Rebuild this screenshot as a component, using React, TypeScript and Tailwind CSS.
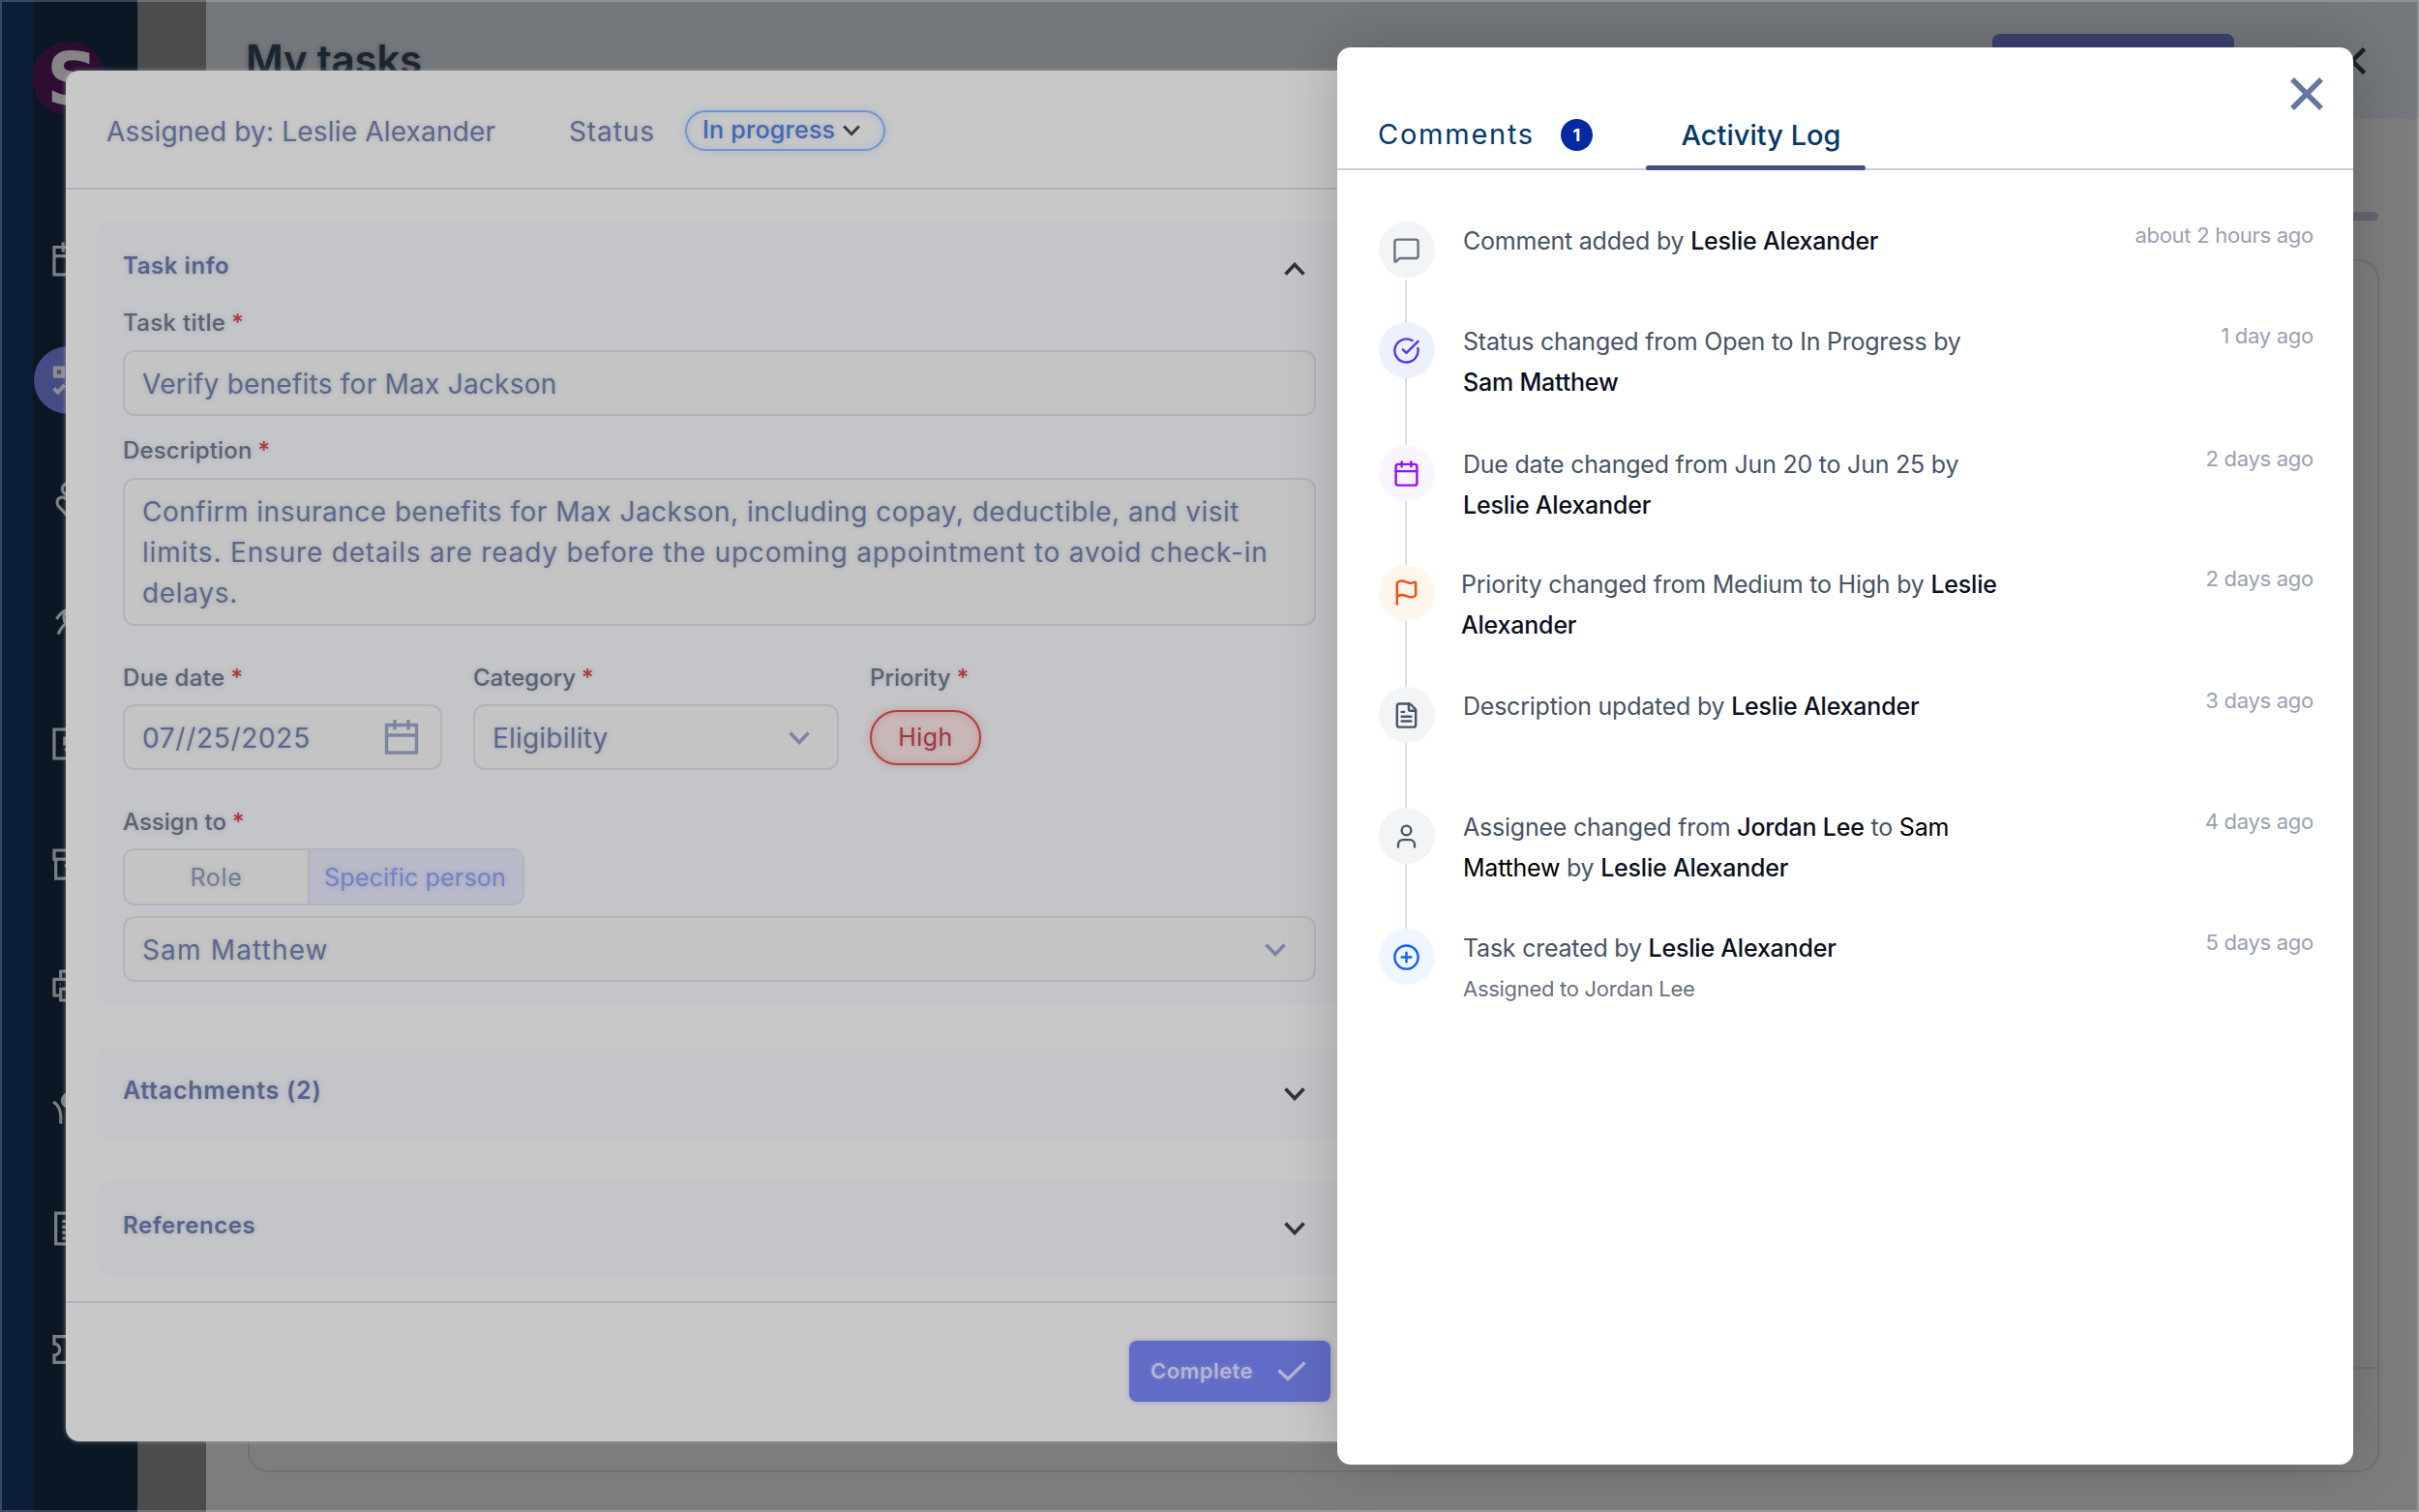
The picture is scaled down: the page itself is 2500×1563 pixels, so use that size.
import React from "react";
import {
  Calendar,
  CircleCheckBig,
  CirclePlus,
  FileText,
  Flag,
  MessageSquare,
  User,
} from "lucide-react";

/* ---------- sidebar icons ---------- */

const navIcons: React.ReactNode[] = [
  <g key="calendar">
    <path d="M3 4.5h18v17H3zM3 10h18M8.5 1.5v6M15.5 1.5v6" />
  </g>,
  <g key="tasks">
    <path d="M3.500 4.500h5v5h-5zM2.800 17l2.500 2.500L9.500 15M13.5 7H21M13.5 17.5H21" strokeWidth="2.4" />
  </g>,
  <g key="care">
    <circle cx="11.5" cy="4.5" r="3.5" />
    <path d="M12 22 6 15.5c-2-2.2-1.2-5.5 1.5-5.8 1.8-.2 3.5 1 4.5 2.8 1-1.800 2.700-3 4.500-2.800 2.700.3 3.500 3.600 1.500 5.800Z" />
  </g>,
  <g key="exam">
    <path d="M4.500 9.500C6 7 8 5 10.500 4M5.500 19c1-2.500 2-4.500 4-6M10.500 4c-2 3-2 6 0 9M14 8l4 4M12 12l6 6" />
  </g>,
  <g key="billing">
    <path d="M3 3h18v18H3z" />
    <path d="M14.500 8.500H9.500V12h5v3.500h-5M12 7v10" />
  </g>,
  <g key="archive">
    <path d="M3 3h18v5.500H3zM4 8.500h16V20.500H4zM9.500 12.500h5" />
  </g>,
  <g key="printer">
    <path d="M7 8V3h10v5M6 18H3V8h18v10h-3M7 14h10v7H7zM6.500 11h.5" />
  </g>,
  <g key="people">
    <path d="M2.500 8.500c4 2.500 5 6.500 4.500 13.500M21.500 8.500c-4 2.500-5 6.500-4.500 13.500" />
    <circle cx="12" cy="7.500" r="4" fill="currentColor" />
  </g>,
  <g key="notes">
    <path d="M4 2.500h16v19H4zM8 7.500h8M8 11h8M8 14.500h8M8 18h5" />
  </g>,
  <g key="ticket">
    <path d="M3 4h18v4.500a3.500 3.500 0 0 0 0 7V20H3v-4.500a3.500 3.500 0 0 0 0-7Z" />
  </g>,
];

function Backdrop() {
  return (
    <div className="flex h-full w-full">
      <div className="w-[34px] bg-[#0c1e39]" />
      <div className="flex w-[108px] flex-col bg-[#0b1724]">
        <div className="ml-[-1px] mt-[43px] flex h-[76px] w-[76px] items-center rounded-full bg-[#2d0e32] pl-[15px] pt-[2px] text-[74px] font-bold leading-none text-[#858585] [font-family:'DejaVu_Sans',sans-serif]">
          S
        </div>
        <div className="mt-[86px] flex w-[73px] flex-col text-[#7b8085]">
          {navIcons.map((icon, i) => (
            <div key={i} className="flex h-[125.300px] items-center justify-center">
              <div
                className={
                  i === 1
                    ? "flex h-[70px] w-[72px] shrink-0 items-center justify-center rounded-full bg-[#454b84] text-[#8d8d8f]"
                    : "flex h-[70px] w-[72px] shrink-0 items-center justify-center"
                }
              >
                <svg viewBox="0 0 24 24" className="h-[40px] w-[40px]" fill="none" stroke="currentColor" strokeWidth="1.900">
                  {icon}
                </svg>
              </div>
            </div>
          ))}
        </div>
      </div>
      <div className="w-[71px] bg-[#4c4c4e]" />
      <div className="flex flex-1 flex-col bg-[#7d7d7d]">
        <div className="flex h-[123px] items-start bg-[#74777b]">
          <div className="ml-[41px] mt-[37px] w-[1805px] text-[42px] font-semibold leading-[50px] tracking-[-0.200px] text-[#1b2531] [text-shadow:0_0_5px_#1b253166]">
            My tasks
          </div>
          <div className="mt-[35px] h-[60px] w-[250px] rounded-[8px] bg-[#3c4172]" />
          <svg viewBox="0 0 28 28" className="ml-[108px] mt-[49px] h-[28px] w-[28px]" stroke="#1f1f1f" strokeWidth="4.500">
            <path d="M1.500 1.500l25 25M26.500 1.500l-25 25" />
          </svg>
        </div>
        <div className="ml-[43px] mt-[96px] h-[9px] w-[2202px] rounded-full bg-[#636672]" />
        <div className="ml-[43px] mt-[40px] flex h-[1254px] w-[2203px] flex-col justify-end rounded-[22px] border-2 border-[#6f7078]">
          <div className="h-[107px] border-t-2 border-[#727272]" />
        </div>
      </div>
    </div>
  );
}

/* ---------- task form ---------- */

function Chevron({ up = false, className = "" }: { up?: boolean; className?: string }) {
  return (
    <svg viewBox="0 0 22 14" className={className} fill="none" stroke="currentColor" strokeWidth="3.600">
      <path d={up ? "M1.500 12.500 11 2.500l9.500 10" : "M1.500 1.500 11 11.500l9.500-10"} />
    </svg>
  );
}

function Label({ children, className = "" }: { children: string; className?: string }) {
  return (
    <div className={`text-[24px] font-medium leading-[29px] text-[#59636f] ${className}`}>
      {children}
      <span className="ml-[6px] text-[#b5373a]">*</span>
    </div>
  );
}

const field =
  "flex items-center rounded-[12px] border-2 border-[#b1b4b9] bg-[#c4c4c4] pl-[18px] pt-[2px] text-[28px] text-[#5c6889]";

const card = "rounded-[14px] bg-[#c4c5c9] pl-[28px]";
const heading = "text-[24px] font-semibold text-[#58638a]";

function TaskModal() {
  return (
    <div className="absolute left-[68px] top-[73px] flex h-[1417px] w-[2320px] flex-col rounded-[14px] bg-[#c8c8c8] shadow-[0_0_5px_#c8c8c888] [text-shadow:0_0_5px_#5b6a8f55]">
      <div className="flex h-[123px] items-center border-b-2 border-[#b0b3bb] pl-[42px] pt-[2px] text-[28px] text-[#5c6889]">
        <div className="w-[478px] pt-[2px] tracking-[0.180px]">Assigned by: Leslie Alexander</div>
        <div className="w-[120px] pt-[2px] tracking-[0.900px]">Status</div>
        <div className="flex h-[42px] w-[207px] items-center rounded-full border-2 border-[#7096cd] pl-[16px] text-[25px] font-medium text-[#3e68b8] shadow-[0_0_8px_#7096cd66,inset_0_0_8px_#7096cd55]">
          <span className="w-[145px] tracking-[0.250px]">In progress</span>
          <Chevron className="h-[12px] w-[18px] text-[#3a3a3a]" />
        </div>
      </div>
      <div className="flex flex-col pl-[31px] pt-[33px]">
        <div className={`${card} pb-[24px]`}>
          <div className={`${heading} flex h-[90px] w-[1222px] items-center justify-between`}>
            <span className="mt-[2px] tracking-[0.560px]">Task info</span>
            <Chevron up className="mt-[8px] h-[14px] w-[22px] text-[#333335]" />
          </div>
          <Label className="h-[43px] tracking-[0.340px]">Task title</Label>
          <div className={`${field} h-[68px] w-[1233px] tracking-[0.240px]`}>Verify benefits for Max Jackson</div>
          <Label className="h-[64px] pt-[21px] tracking-[0.160px]">Description</Label>
          <div className="h-[153px] w-[1233px] whitespace-nowrap rounded-[12px] border-2 border-[#b1b4b9] bg-[#c4c4c4] pl-[18px] pt-[12px] text-[28px] leading-[42px] text-[#5c6889]">
            <div className="tracking-[0.500px]">Confirm insurance benefits for Max Jackson, including copay, deductible, and visit</div>
            <div className="tracking-[0.820px]">limits. Ensure details are ready before the upcoming appointment to avoid check-in</div>
            <div className="tracking-[0.700px]">delays.</div>
          </div>
          <div className="flex">
            <div className="w-[362px]">
              <Label className="h-[81px] pt-[39px] tracking-[0.340px]">Due date</Label>
              <div className={`${field} h-[68px] w-[330px] justify-between pr-[22px] tracking-[0.700px]`}>
                07//25/2025
                <svg viewBox="0 0 36 36" className="mt-[-2px] h-[36px] w-[36px]" fill="none" stroke="#7c86a0" strokeWidth="3.400">
                  <path d="M2.500 5.500h31v28.500h-31zM2.500 16h31M11 0v10.500M25 0v10.500" />
                </svg>
              </div>
            </div>
            <div className="w-[410px]">
              <Label className="h-[81px] pt-[39px]">Category</Label>
              <div className={`${field} h-[68px] w-[378px] justify-between pr-[28px] tracking-[0.200px]`}>
                Eligibility
                <Chevron className="h-[14px] w-[22px] text-[#7c86a3]" />
              </div>
            </div>
            <div>
              <Label className="h-[87px] pt-[39px]">Priority</Label>
              <div className="flex h-[57px] w-[115px] items-center justify-center rounded-full border-2 border-[#b0403f] bg-[#c9b8b8] text-[25px] font-normal tracking-[0.500px] text-[#a93436] shadow-[0_0_8px_#b0403f55,inset_0_0_10px_#b0403f44]">
                High
              </div>
            </div>
          </div>
          <Label className="h-[81px] pt-[39px]">Assign to</Label>
          <div className="flex h-[59px] w-[415px] overflow-hidden rounded-[12px] border-2 border-[#b1b4b9] text-[25px]">
            <div className="flex w-[189px] items-center justify-center bg-[#c4c4c4] pt-[2px] tracking-[0.700px] text-[#747d90]">Role</div>
            <div className="flex flex-1 items-center justify-center border-l-2 border-[#b1b4b9] bg-[#b8bac9] pr-[2px] pt-[2px] tracking-[0.190px] text-[#7381cb]">
              Specific person
            </div>
          </div>
          <div className={`${field} mt-[11px] h-[68px] w-[1233px] justify-between pr-[29px] tracking-[1.150px]`}>
            Sam Matthew
            <Chevron className="h-[14px] w-[22px] text-[#7c86a3]" />
          </div>
        </div>
        <div className={`${card} ${heading} mt-[43px] h-[97px]`}>
          <div className="flex h-full w-[1222px] items-center justify-between">
            <span className="mb-[6px] text-[25px] tracking-[0.750px]">Attachments (2)</span>
            <Chevron className="h-[14px] w-[22px] text-[#333335]" />
          </div>
        </div>
        <div className={`${card} ${heading} mt-[42px] h-[97px]`}>
          <div className="flex h-full w-[1222px] items-center justify-between">
            <span className="mb-[6px] tracking-[0.560px]">References</span>
            <Chevron className="h-[14px] w-[22px] text-[#333335]" />
          </div>
        </div>
      </div>
      <div className="mt-[27px] border-t-2 border-[#b0b3bb] pl-[1099px] pt-[39px]">
        <div className="flex h-[63px] w-[208px] items-center rounded-[8px] bg-[#616cc6] pl-[22px] text-[22px] font-semibold tracking-[0.450px] text-[#b5b5d3] shadow-[0_0_5px_#616cc688] [text-shadow:0_0_5px_#b5b5d366]">
          <span className="w-[131px]">Complete</span>
          <svg viewBox="0 0 30 21" className="h-[21px] w-[30px]" fill="none" stroke="currentColor" strokeWidth="3.400">
            <path d="M1.500 9.500 11 18.500 28.500 1.500" />
          </svg>
        </div>
      </div>
    </div>
  );
}

/* ---------- activity panel ---------- */

type Entry = {
  icon: React.ReactNode;
  circle: string;
  height: string;
  time: string;
  lines: React.ReactNode[];
  note?: string;
  shift?: string;
};

const B = ({ children }: { children: string }) => (
  <span className="font-medium tracking-[-0.200px] text-[#0a1022]">{children}</span>
);

const ic = "h-[29px] w-[29px]";

const entries: Entry[] = [
  {
    icon: <MessageSquare className={ic} strokeWidth={2} />,
    circle: "bg-[#f3f4f6] text-[#6b7280]",
    height: "h-[104px]",
    time: "about 2 hours ago",
    lines: [<>Comment added by <B>Leslie Alexander</B></>],
  },
  {
    icon: <CircleCheckBig className={ic} strokeWidth={2} />,
    circle: "bg-[#edf1fe] text-[#4f39f6]",
    height: "h-[127px]",
    time: "1 day ago",
    lines: ["Status changed from Open to In Progress by", <B>Sam Matthew</B>],
  },
  {
    icon: <Calendar className={ic} strokeWidth={2} />,
    circle: "bg-[#faf5ff] text-[#9810fa]",
    height: "h-[123.500px]",
    time: "2 days ago",
    lines: ["Due date changed from Jun 20 to Jun 25 by", <B>Leslie Alexander</B>],
  },
  {
    icon: <Flag className={ic} strokeWidth={2} />,
    circle: "bg-[#fff6ec] text-[#fb4a0b]",
    height: "h-[126.500px]",
    time: "2 days ago",
    shift: "ml-[27px]",
    lines: [<>Priority changed from Medium to High by <B>Leslie</B></>, <B>Alexander</B>],
  },
  {
    icon: <FileText className={ic} strokeWidth={2} />,
    circle: "bg-[#f3f4f6] text-[#4a5565]",
    height: "h-[125px]",
    time: "3 days ago",
    lines: [<>Description updated by <B>Leslie Alexander</B></>],
  },
  {
    icon: <User className={ic} strokeWidth={2} />,
    circle: "bg-[#f3f4f6] text-[#4a5565]",
    height: "h-[125px]",
    time: "4 days ago",
    lines: [
      <>Assignee changed from <B>Jordan Lee</B> to <span className="text-black">Sam</span></>,
      <><span className="text-black">Matthew</span> by <B>Leslie Alexander</B></>,
    ],
  },
  {
    icon: <CirclePlus className={ic} strokeWidth={2} />,
    circle: "bg-[#eff6ff] text-[#155dfc]",
    height: "h-[125px]",
    time: "5 days ago",
    lines: [<>Task created by <B>Leslie Alexander</B></>],
    note: "Assigned to Jordan Lee",
  },
];

function ActivityPanel() {
  return (
    <div className="absolute left-[1382px] top-[49px] h-[1465px] w-[1050px] rounded-[14px] bg-white shadow-[0_0_60px_rgba(0,0,0,0.2)]">
      <div className="flex h-[127px] items-end border-b-2 border-[#c6cfde] pl-[42px] text-[29px] text-[#04396b]">
        <div className="flex h-[70px] items-center gap-[26px]">
          <span className="w-[163px] tracking-[1.750px]">Comments</span>
          <span className="flex h-[33px] w-[33px] items-center justify-center rounded-full bg-[#0529a5] text-[18px] font-bold text-white">1</span>
        </div>
        <div className="mb-[-2px] ml-[55px] flex h-[70px] w-[227px] flex-col">
          <div className="flex flex-1 items-center justify-center pl-[11px] pt-[3px] font-medium tracking-[0.020px]">Activity Log</div>
          <div className="h-[5px] rounded-full bg-[#43507f]" />
        </div>
        <svg viewBox="0 0 34 34" className="mb-[60px] ml-auto mr-[31px] h-[34px] w-[34px]" stroke="#6776a0" strokeWidth="5.500">
          <path d="M2 2l30 30M32 2L2 32" />
        </svg>
      </div>
      <div className="flex flex-col pl-[43px] pr-[41px] pt-[53px] text-[25px] tracking-[-0.230px] text-[#475467]">
        {entries.map((e, i) => (
          <div key={i} className={`flex ${e.height}`}>
            <div className="flex w-[58px] shrink-0 flex-col items-center">
              <div className={`flex h-[58px] w-[58px] shrink-0 items-center justify-center rounded-full pr-px ${e.circle}`}>{e.icon}</div>
              {i < entries.length - 1 && <div className={`mr-[2px] w-[2px] flex-1 bg-[#d5ddf0] ${i === 0 ? "mt-[2px]" : ""}`} />}
            </div>
            <div className={`mt-[-1px] flex-1 whitespace-nowrap leading-[42px] ${e.shift ?? "ml-[29px]"}`}>
              {e.lines.map((l, j) => (
                <div key={j}>{l}</div>
              ))}
              {e.note && <div className="text-[22px] tracking-[-0.290px] text-[#6a7282]">{e.note}</div>}
            </div>
            <div className="mt-[-1px] text-[22px] leading-[30px] tracking-[-0.280px] text-[#99a1b3]">{e.time}</div>
          </div>
        ))}
      </div>
    </div>
  );
}

export default function App() {
  return (
    <div className="relative h-[1563px] w-[2500px] overflow-hidden [font-family:Inter,sans-serif]">
      <Backdrop />
      <TaskModal />
      <ActivityPanel />
      <div className="pointer-events-none absolute inset-0 border-2 border-white/20" />
    </div>
  );
}
